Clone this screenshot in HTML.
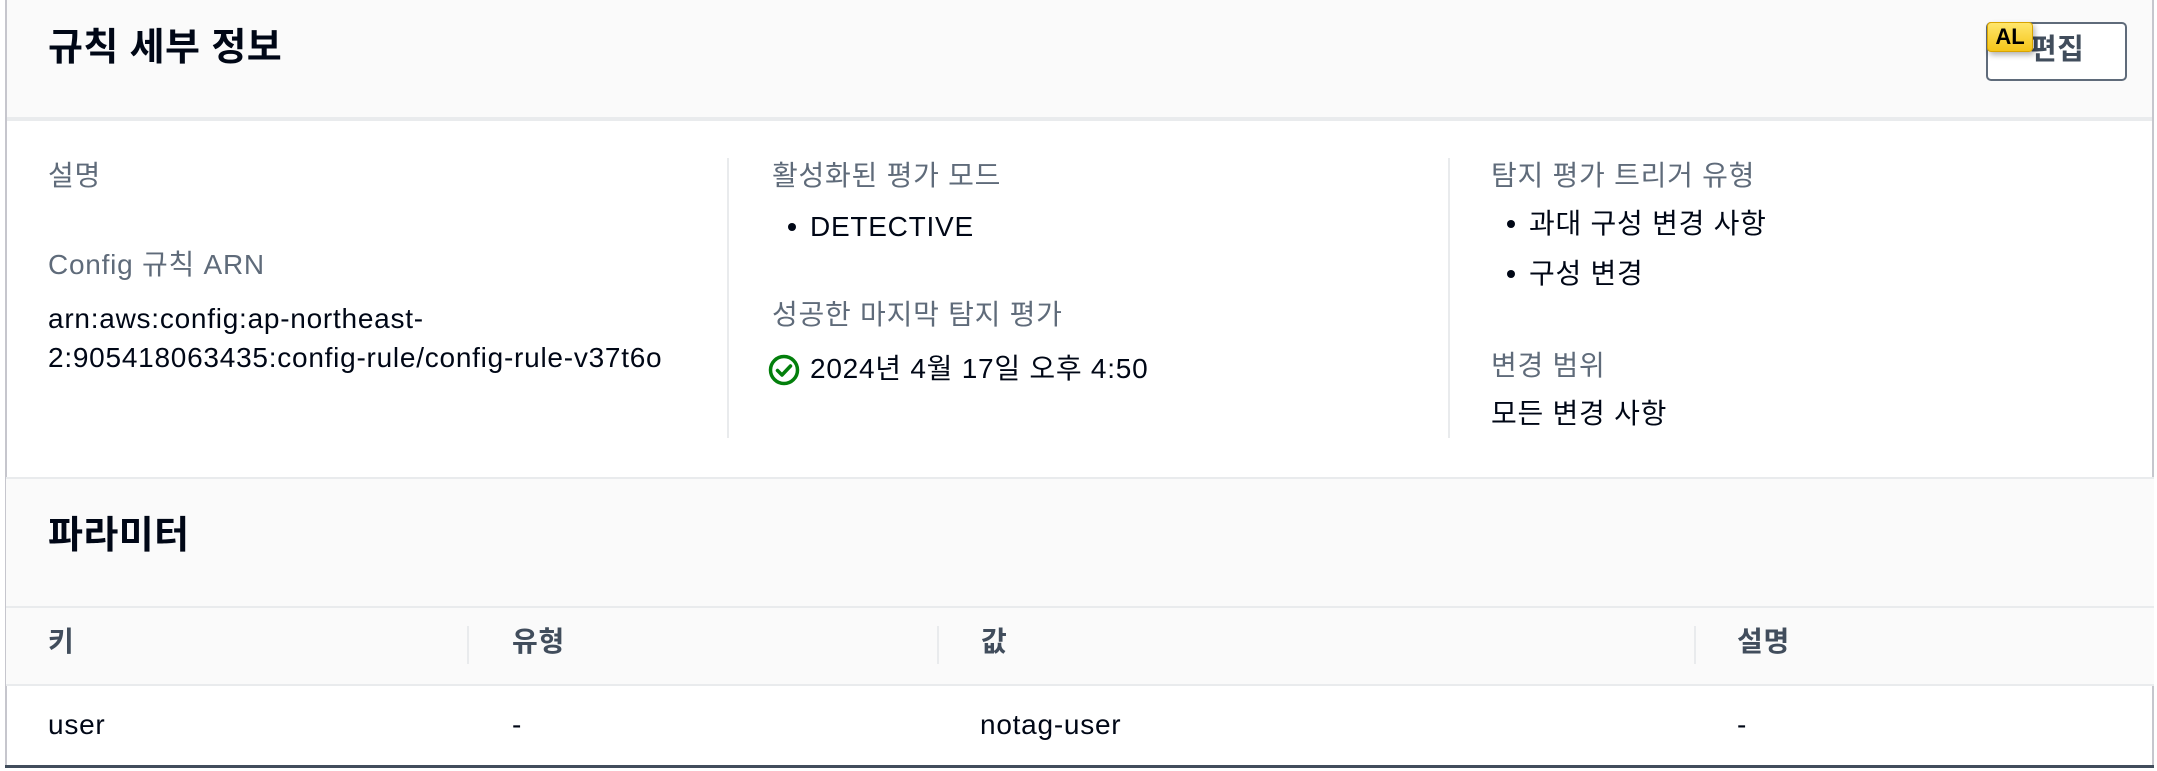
<!DOCTYPE html>
<html><head><meta charset="utf-8"><style>
*{margin:0;padding:0;box-sizing:border-box}
body{width:2157px;height:771px;background:#fff;position:relative;overflow:hidden;font-family:"Liberation Sans","Noto Sans CJK KR",sans-serif;color:#000716;font-size:28px;letter-spacing:0.75px}
.a{position:absolute;white-space:nowrap;line-height:1}
.lbl{color:#5f6b7a}
.h{font-weight:bold;font-size:38px;color:#000716;letter-spacing:0.4px}
.th{font-weight:bold;color:#414d5c}
.bul::before{content:"";position:absolute;left:-22px;top:10px;width:8px;height:8px;border-radius:50%;background:#000716}
</style></head><body>
<div class="a" style="left:6px;top:0;width:2148px;height:117px;background:#fafafa"></div>
<div class="a" style="left:6px;top:117px;width:2148px;height:4px;background:#e9ebed"></div>
<div class="a" style="left:5px;top:0;width:2px;height:766px;background:#c6c6cd"></div>
<div class="a" style="left:2152px;top:0;width:2px;height:766px;background:#c6c6cd"></div>
<div class="a h" style="left:48px;top:29px">규칙 세부 정보</div>
<div class="a" style="left:1986px;top:22px;width:141px;height:59px;border:2px solid #5f6b7a;border-radius:5px;background:#fff"></div>
<div class="a" style="left:2030px;top:36px;font-weight:bold;font-size:29px;color:#414d5c;letter-spacing:0.4px">편집</div>
<div class="a" style="left:1987px;top:22px;width:46px;height:30px;border-radius:4px;background:linear-gradient(#ffe66b,#f5c518);border:1px solid #d9a400;box-shadow:2px 3px 6px rgba(0,0,0,.3);font-weight:bold;font-size:22px;color:#000;text-align:center;line-height:28px;letter-spacing:0">AL</div>

<div class="a lbl" style="left:48px;top:162px">설명</div>
<div class="a lbl" style="left:48px;top:251px">Config 규칙 ARN</div>
<div class="a" style="left:48px;top:305px">arn:aws:config:ap-northeast-</div>
<div class="a" style="left:48px;top:344px">2:905418063435:config-rule/config-rule-v37t6o</div>

<div class="a" style="left:727px;top:158px;width:2px;height:280px;background:#e9ebed"></div>
<div class="a lbl" style="left:772px;top:162px">활성화된 평가 모드</div>
<div class="a bul" style="left:810px;top:213px">DETECTIVE</div>
<div class="a lbl" style="left:772px;top:301px">성공한 마지막 탐지 평가</div>
<svg class="a" style="left:768px;top:354px" width="32" height="32" viewBox="0 0 32 32"><circle cx="16" cy="16" r="13.5" fill="none" stroke="#037f0c" stroke-width="3.5"/><path d="M9.5 16.5l4.5 4.5 8.5-9" fill="none" stroke="#037f0c" stroke-width="3.5" stroke-linecap="round" stroke-linejoin="round"/></svg>
<div class="a" style="left:810px;top:355px">2024년 4월 17일 오후 4:50</div>

<div class="a" style="left:1448px;top:158px;width:2px;height:280px;background:#e9ebed"></div>
<div class="a lbl" style="left:1491px;top:162px">탐지 평가 트리거 유형</div>
<div class="a bul" style="left:1529px;top:210px">과대 구성 변경 사항</div>
<div class="a bul" style="left:1529px;top:260px">구성 변경</div>
<div class="a lbl" style="left:1491px;top:352px">변경 범위</div>
<div class="a" style="left:1491px;top:400px">모든 변경 사항</div>

<div class="a" style="left:6px;top:477px;width:2148px;height:130px;background:#fafafa;border-top:2px solid #e9ebed"></div>
<div class="a h" style="left:48px;top:517px">파라미터</div>
<div class="a" style="left:6px;top:606px;width:2148px;height:2px;background:#e9ebed"></div>
<div class="a" style="left:6px;top:608px;width:2148px;height:76px;background:#fafafa"></div>
<div class="a" style="left:6px;top:684px;width:2148px;height:2px;background:#e9ebed"></div>
<div class="a" style="left:467px;top:626px;width:2px;height:38px;background:#e9ebed"></div>
<div class="a" style="left:937px;top:626px;width:2px;height:38px;background:#e9ebed"></div>
<div class="a" style="left:1694px;top:626px;width:2px;height:38px;background:#e9ebed"></div>
<div class="a th" style="left:48px;top:628px">키</div>
<div class="a th" style="left:512px;top:628px">유형</div>
<div class="a th" style="left:981px;top:628px">값</div>
<div class="a th" style="left:1737px;top:628px">설명</div>
<div class="a" style="left:48px;top:711px">user</div>
<div class="a" style="left:512px;top:711px">-</div>
<div class="a" style="left:980px;top:711px">notag-user</div>
<div class="a" style="left:1737px;top:711px">-</div>
<div class="a" style="left:5px;top:765px;width:2149px;height:3px;background:#414d5c"></div>
</body></html>
